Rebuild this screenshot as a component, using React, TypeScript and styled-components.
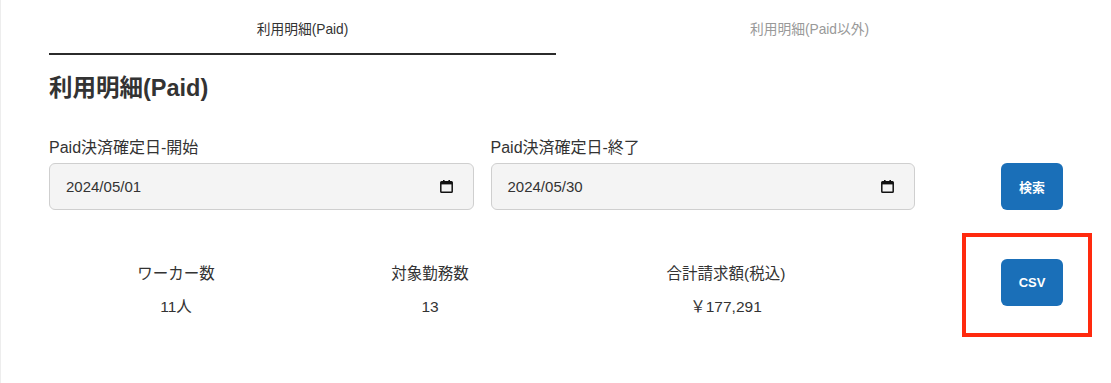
import React from "react";
import styled, { createGlobalStyle } from "styled-components";

const GlobalStyle = createGlobalStyle`
  html, body { margin: 0; padding: 0; background: #fff; }
  body {
    font-family: "Liberation Sans", "Noto Sans CJK JP", sans-serif;
    color: #333;
  }
`;

const Page = styled.div`
  width: 1111px;
  height: 383px;
  box-sizing: border-box;
  border-left: 1px solid #ededed;
  padding: 0 48px 0 48px;
  overflow: hidden;
`;

const TabBar = styled.div`
  display: grid;
  grid-template-columns: 1fr 1fr;
`;

const Tab = styled.div<{ $active?: boolean }>`
  box-sizing: border-box;
  height: 55px;
  padding-top: 20px;
  font-size: 13.75px;
  line-height: 20px;
  text-align: center;
  color: ${(p) => (p.$active ? "#333" : "#999")};
  border-bottom: 2px solid ${(p) => (p.$active ? "#2b2b2b" : "transparent")};
`;

const Heading = styled.h1`
  margin: 18px 0 0 0;
  font-size: 23.5px;
  line-height: 31px;
  font-weight: 700;
  color: #333;
`;

const SearchRow = styled.div`
  display: grid;
  grid-template-columns: 1fr 1fr 131px;
  column-gap: 17px;
  align-items: end;
  margin-top: 33px;
`;

const Field = styled.div`
  display: flex;
  flex-direction: column;
`;

const Label = styled.label`
  font-size: 16px;
  line-height: 22px;
  color: #333;
  margin-bottom: 4px;
`;

const DateBox = styled.div`
  box-sizing: border-box;
  height: 47px;
  display: flex;
  align-items: center;
  justify-content: space-between;
  padding: 0 20px 0 16px;
  background: #f4f4f4;
  border: 1px solid #cfcfcf;
  border-radius: 6px;
  font-size: 15px;
  color: #333;
`;

const Button = styled.button`
  justify-self: end;
  width: 62px;
  height: 47px;
  border: none;
  border-radius: 6px;
  background: #1a6fb8;
  color: #fff;
  font-family: "Liberation Sans", "Noto Sans CJK JP", sans-serif;
  font-size: 13px;
  font-weight: 700;
  padding: 0;
  cursor: pointer;
`;

const StatsRow = styled.div`
  display: grid;
  grid-template-columns: 254px 254px 338px 1fr;
  margin-top: 49px;
  align-items: start;
`;

const Stat = styled.div`
  display: flex;
  flex-direction: column;
  align-items: center;
  padding-top: 4px;
  font-size: 15.5px;
  line-height: 22px;
  color: #333;
`;

const StatValue = styled.div`
  margin-top: 11px;
`;

const ActionCell = styled.div`
  position: relative;
  justify-self: end;
  display: flex;
`;

const Highlight = styled.div`
  position: absolute;
  left: -39px;
  right: -29px;
  top: -26px;
  bottom: -31px;
  border: 4px solid #ff2a0e;
  pointer-events: none;
`;

const CalendarIcon = () => (
  <svg width="13" height="13" viewBox="0 0 13 13" aria-hidden="true">
    <rect x="3" y="0" width="1.6" height="2.5" fill="#111" />
    <rect x="8.4" y="0" width="1.6" height="2.5" fill="#111" />
    <rect x="0.8" y="1.8" width="11.4" height="10.4" rx="0.8" fill="none" stroke="#111" strokeWidth="1.5" />
    <rect x="0.8" y="1.8" width="11.4" height="2.6" fill="#111" />
  </svg>
);

const DateField = ({ label, value }: { label: string; value: string }) => (
  <Field>
    <Label>{label}</Label>
    <DateBox>
      <span>{value}</span>
      <CalendarIcon />
    </DateBox>
  </Field>
);

export default function App() {
  return (
    <>
      <GlobalStyle />
      <Page>
        <TabBar>
          <Tab $active>利用明細(Paid)</Tab>
          <Tab>利用明細(Paid以外)</Tab>
        </TabBar>
        <Heading>利用明細(Paid)</Heading>
        <SearchRow>
          <DateField label="Paid決済確定日-開始" value="2024/05/01" />
          <DateField label="Paid決済確定日-終了" value="2024/05/30" />
          <Button>検索</Button>
        </SearchRow>
        <StatsRow>
          <Stat>
            <div>ワーカー数</div>
            <StatValue>11人</StatValue>
          </Stat>
          <Stat>
            <div>対象勤務数</div>
            <StatValue>13</StatValue>
          </Stat>
          <Stat>
            <div>合計請求額(税込)</div>
            <StatValue>￥177,291</StatValue>
          </Stat>
          <ActionCell>
            <Button>CSV</Button>
            <Highlight />
          </ActionCell>
        </StatsRow>
      </Page>
    </>
  );
}
